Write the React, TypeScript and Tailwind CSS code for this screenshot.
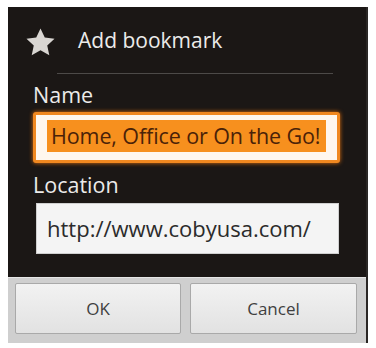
import { useState } from 'react';

function StarIcon() {
  return (
    <svg width="33" height="33" viewBox="0 0 24 24" className="shrink-0 -ml-[3px] mt-[3px]">
      <path
        d="M12 1.8l3.1 6.6 7.1.8-5.3 4.9 1.5 7.1L12 17.6l-6.4 3.6 1.5-7.1L1.8 9.2l7.1-.8z"
        fill="#d9d6d2"
      />
    </svg>
  );
}

export default function App() {
  const [url, setUrl] = useState('http://www.cobyusa.com/');

  return (
    <div className="w-[376px] h-[348px] bg-white pt-[7px] pl-[8px] font-['Open_Sans',sans-serif]">
      <div className="w-[360px] h-[336px] flex flex-col border-r-2 border-[#2a2725] bg-[#1b1715]">
        {/* title */}
        <div className="h-[66px] flex items-center pl-[19px] pt-[2px]">
          <StarIcon />
          <span className="ml-[21px] text-[21px] text-[#ecebea]">Add bookmark</span>
        </div>
        <div className="ml-[49px] w-[276px] h-px bg-[#4d4a48]" />

        {/* fields */}
        <div className="flex-1 flex flex-col pl-[25px] pr-[26px]">
          <label className="mt-[8px] text-[21.5px] leading-[26px] text-[#ecebea]">Name</label>
          <div className="mt-[4px] h-[51px] rounded-[3px] border-[3px] border-[#f08820] bg-[#fff7ee] shadow-[0_0_4px_#e07010] px-[11px] pt-[5px] pb-[8px] flex items-center">
            <span className="bg-[#f7901e] w-full h-[32px] flex items-center pl-[4px] whitespace-nowrap text-[21.5px] text-[#4a2208] tracking-[-0.1px]">
              Home, Office or On the Go!
            </span>
          </div>
          <label className="mt-[9px] text-[21.5px] leading-[26px] text-[#ecebea]">Location</label>
          <div className="mt-[5px] ml-[3px] mr-[1px] h-[51px] bg-[#f4f4f4] border border-[#cfcfcf] px-[10px] flex items-center">
            <input
              value={url}
              onChange={(e) => setUrl(e.target.value)}
              className="w-full bg-transparent outline-none text-[22px] text-[#2b2b2b]"
            />
          </div>
        </div>

        {/* buttons */}
        <div className="h-[66px] mt-[2px] bg-[#cfcfcf] border-t border-[#e6e6e6] flex gap-[9px] pl-[7px] pt-[5px]">
          <button className="w-[166px] h-[51px] rounded-[2px] border border-[#a9a9a9] bg-gradient-to-b from-[#f2f2f2] to-[#e2e2e2] text-[17px] text-[#3f3f3f]">
            OK
          </button>
          <button className="w-[167px] h-[51px] rounded-[2px] border border-[#a9a9a9] bg-gradient-to-b from-[#f2f2f2] to-[#e2e2e2] text-[17px] text-[#3f3f3f]">
            Cancel
          </button>
        </div>
      </div>
    </div>
  );
}
